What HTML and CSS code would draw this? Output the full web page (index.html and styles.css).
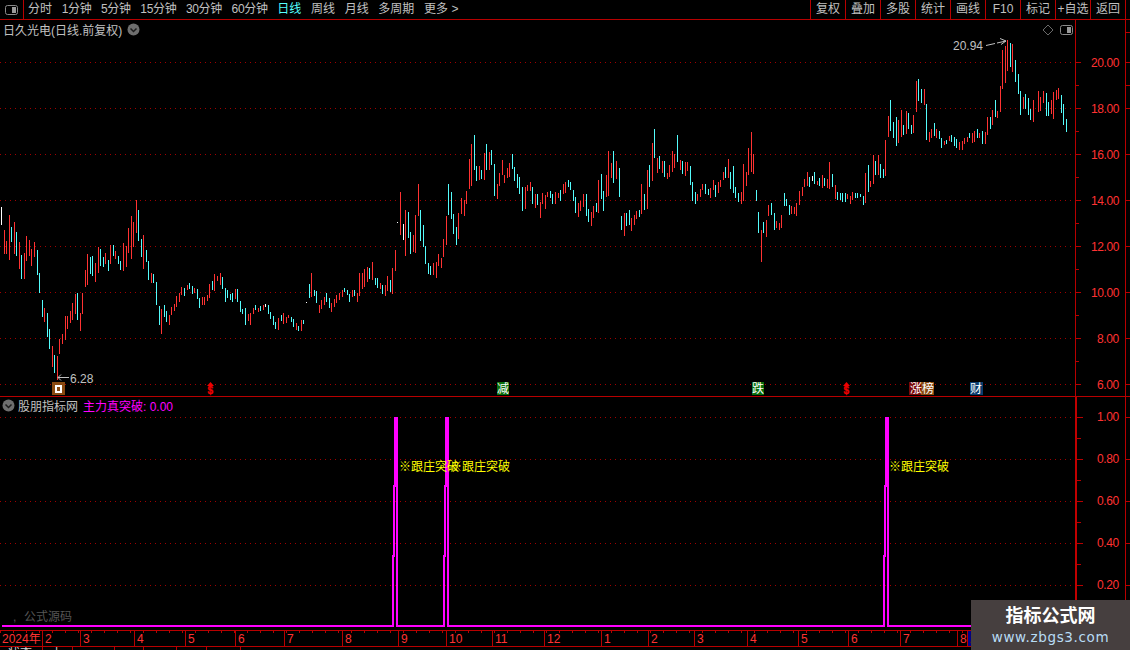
FILE: index.html
```html
<!DOCTYPE html>
<html lang="zh">
<head>
<meta charset="utf-8">
<title>日久光电</title>
<link rel="stylesheet" href="styles.css">
</head>
<body>
<div class="app">
  <header class="toolbar">
    <div class="toggle">
      <svg width="13" height="10" viewBox="0 0 13 10"><rect x=".5" y=".5" width="12" height="9" rx="2" fill="#000" stroke="#8a8a8a"/><rect x="7" y="2" width="4" height="6" fill="#9a9a9a"/></svg>
    </div>
    <nav class="periods">
      <span>分时</span><span class="n">1分钟</span><span class="n">5分钟</span><span class="n">15分钟</span><span class="n">30分钟</span><span class="n">60分钟</span><span class="on">日线</span><span>周线</span><span>月线</span><span>多周期</span><span>更多 &gt;</span>
    </nav>
    <nav class="actions">
      <span>复权</span><span>叠加</span><span>多股</span><span>统计</span><span>画线</span><span>F10</span><span>标记</span><span>+自选</span><span>返回</span>
    </nav>
  </header>

  <section class="panel upper">
    <div class="legend">
      <span>日久光电(日线.前复权)</span>
      <svg class="chev" width="13" height="13" viewBox="0 0 13 13"><circle cx="6.5" cy="6.5" r="6" fill="#6e6e6e"/><path d="M3.5 5.5 6.500 8.500 9.500 5.500" fill="none" stroke="#1c1c1c" stroke-width="1.500"/></svg>
    </div>
    <svg class="chart" width="1130" height="376" viewBox="0 20 1130 376">
      <path class="grid" d="M0 62.500H1075M0 108.500H1075M0 154.500H1075M0 200.500H1075M0 246.500H1075M0 292.500H1075M0 338.500H1075M0 384.500H1075"/>
      <path class="axis" d="M1075.500 20V396M1125.500 20V396M1075 62.500H1081M1075 85.500H1079M1075 108.500H1081M1075 131.500H1079M1075 154.500H1081M1075 177.500H1079M1075 200.500H1081M1075 223.500H1079M1075 246.500H1081M1075 269.500H1079M1075 292.500H1081M1075 315.500H1079M1075 338.500H1081M1075 361.500H1079M1075 384.500H1081M1126 32.500H1130M1126 62.500H1130M1126 85.500H1130M1126 108.500H1130M1126 154.500H1130M1126 200.500H1130M1126 246.500H1130M1126 292.500H1130M1126 338.500H1130M1126 384.500H1130"/>
      <path class="up" d="M4.500 230V254M6.500 241V254M9.500 215V260M14.500 222V254M19.500 242V269M24.500 253V279M26.500 236V261M29.500 240V256M31.500 249V266M34.500 242V257M44.500 308V322M52.500 346V367M57.500 356V380M59.500 339V354M62.500 334V344M65.500 316V340M67.500 316V329M70.500 311V323M72.500 303V320M75.500 294V314M80.500 313V331M82.500 293V314M85.500 270V287M87.500 254V285M95.500 263V282M98.500 247V273M105.500 253V264M110.500 245V264M115.500 251V259M123.500 243V271M126.500 246V267M128.500 228V253M131.500 216V259M133.500 222V247M136.500 200V233M143.500 235V269M151.500 273V283M161.500 309V334M169.500 315V325M171.500 307V315M174.500 304V311M176.500 296V307M179.500 293V302M181.500 287V295M187.500 285V290M194.500 288V293M202.500 297V305M204.500 297V305M207.500 295V301M209.500 284V298M214.500 274V291M217.500 276V281M220.500 273V285M235.500 289V299M248.500 314V321M250.500 313V325M253.500 308V314M258.500 308V312M263.500 305V310M278.500 318V330M283.500 313V324M286.500 317V323M288.500 315V318M296.500 323V330M301.500 320V331M311.500 273V297M319.500 305V313M321.500 300V309M324.500 297V305M331.500 303V312M334.500 299V307M336.500 295V303M339.500 293V300M342.500 290V297M352.500 290V297M357.500 293V302M359.500 273V296M362.500 273V289M364.500 269V287M367.500 267V282M372.500 262V280M380.500 283V289M385.500 285V296M387.500 276V291M392.500 268V294M395.500 250V271M400.500 192V235M405.500 210V256M413.500 235V252M415.500 215V253M418.500 184V216M433.500 263V275M436.500 262V278M438.500 254V266M441.500 258V268M443.500 239V257M446.500 216V245M458.500 213V239M461.500 198V214M464.500 200V216M466.500 191V204M469.500 159V189M471.500 144V186M479.500 166V180M484.500 153V180M489.500 152V170M497.500 184V199M499.500 173V186M502.500 160V175M504.500 175V183M507.500 168V178M509.500 163V177M525.500 187V209M527.500 185V191M530.500 182V191M535.500 194V208M540.500 202V218M542.500 193V204M545.500 195V209M547.500 192V197M555.500 192V204M558.500 193V198M563.500 184V194M565.500 182V193M578.500 203V217M580.500 201V211M583.500 194V207M591.500 212V226M593.500 206V218M598.500 180V213M606.500 175V197M608.500 151V196M611.500 163V178M616.500 161V179M624.500 213V236M631.500 218V231M634.500 215V225M636.500 211V219M641.500 184V214M647.500 170V209M652.500 143V181M657.500 158V173M662.500 161V173M667.500 173V179M669.500 165V177M672.500 151V172M674.500 154V168M680.500 160V170M685.500 162V176M687.500 162V171M697.500 194V201M700.500 189V197M702.500 184V190M710.500 188V198M713.500 180V190M718.500 182V193M720.500 180V187M723.500 172V180M728.500 159V178M741.500 192V204M743.500 164V201M746.500 172V186M748.500 148V175M751.500 132V172M753.500 154V174M761.500 230V262M766.500 220V237M768.500 205V216M776.500 221V228M779.500 223V230M781.500 215V228M791.500 206V214M794.500 207V214M796.500 203V216M799.500 191V205M802.500 187V196M804.500 179V187M807.500 172V186M817.500 181V185M822.500 175V188M827.500 179V188M829.500 162V189M835.500 185V199M847.500 194V199M850.500 196V204M852.500 192V200M865.500 173V203M870.500 181V187M873.500 155V184M878.500 155V175M885.500 140V176M888.500 116V137M898.500 120V143M901.500 110V137M906.500 111V134M913.500 115V133M916.500 81V112M924.500 89V105M929.500 132V142M931.500 129V138M936.500 129V138M944.500 141V145M949.500 136V141M959.500 142V150M962.500 141V150M964.500 138V144M967.500 137V142M972.500 133V143M974.500 131V142M979.500 133V138M985.500 132V144M987.500 117V135M992.500 110V125M997.500 111V118M1000.500 86V112M1002.500 50V89M1005.500 46V83M1007.500 40V71M1012.500 44V72M1023.500 97V109M1033.500 100V122M1038.500 91V112M1040.500 97V111M1043.500 91V103M1051.500 100V114M1053.500 92V119M1056.500 90V100M1058.500 88V99"/>
      <path class="down" d="M11.500 227V242M16.500 232V256M21.500 255V279M37.500 250V275M39.500 273V293M42.500 300V317M47.500 313V337M49.500 329V349M54.500 355V373M77.500 293V320M90.500 257V274M92.500 256V276M100.500 249V266M103.500 257V267M108.500 260V271M113.500 245V256M118.500 256V264M120.500 261V270M138.500 210V241M141.500 239V257M146.500 250V262M148.500 261V280M153.500 274V283M156.500 282V305M159.500 306V325M164.500 305V317M166.500 311V322M184.500 288V296M189.500 283V289M192.500 286V294M197.500 289V299M199.500 298V308M212.500 281V290M222.500 277V289M225.500 288V302M227.500 290V298M230.500 294V300M232.500 293V302M237.500 289V302M240.500 301V312M242.500 309V314M245.500 308V325M255.500 305V310M260.500 306V311M268.500 305V314M270.500 312V319M273.500 316V325M275.500 322V329M281.500 315V321M291.500 317V322M293.500 319V327M298.500 326V331M303.500 320V324M309.500 284V298M314.500 290V296M316.500 291V303M326.500 293V302M329.500 298V308M344.500 288V292M347.500 290V295M349.500 294V302M354.500 290V296M369.500 268V279M375.500 278V285M377.500 278V288M382.500 285V294M390.500 280V292M408.500 212V238M410.500 232V254M420.500 210V241M423.500 225V247M425.500 246V264M428.500 263V274M430.500 266V275M448.500 184V215M451.500 192V219M453.500 214V234M456.500 227V245M474.500 135V170M476.500 166V181M481.500 170V179M486.500 144V170M491.500 150V165M494.500 164V196M512.500 154V169M514.500 167V181M517.500 174V188M519.500 177V194M522.500 187V211M532.500 187V204M537.500 194V205M550.500 191V198M552.500 194V204M560.500 190V201M568.500 180V187M570.500 182V190M573.500 190V201M575.500 197V213M586.500 194V216M588.500 209V222M596.500 203V212M601.500 174V199M603.500 191V211M613.500 151V183M619.500 168V197M621.500 216V230M626.500 213V226M629.500 210V225M639.500 210V217M644.500 194V210M649.500 165V187M654.500 129V158M659.500 156V169M664.500 161V177M677.500 135V162M682.500 161V174M690.500 166V185M692.500 182V201M695.500 192V204M705.500 184V194M708.500 189V195M715.500 185V197M725.500 167V178M730.500 172V189M733.500 166V193M735.500 187V198M738.500 193V202M756.500 190V201M758.500 212V233M763.500 222V233M771.500 203V215M774.500 213V230M784.500 193V206M786.500 199V206M789.500 205V215M809.500 177V187M814.500 172V184M819.500 178V186M824.500 178V186M832.500 174V187M837.500 192V200M840.500 193V200M842.500 193V202M845.500 193V202M855.500 193V198M857.500 193V198M860.500 194V197M863.500 196V205M868.500 165V192M875.500 161V175M880.500 164V178M883.500 169V178M890.500 100V131M893.500 122V138M896.500 117V146M903.500 125V135M908.500 113V129M911.500 125V134M918.500 79V101M921.500 89V103M926.500 104V140M934.500 123V136M939.500 131V139M941.500 138V148M946.500 140V144M951.500 135V142M954.500 137V146M956.500 139V148M969.500 133V138M977.500 129V138M982.500 131V144M990.500 117V129M995.500 100V117M1010.500 43V67M1015.500 60V82M1018.500 74V94M1020.500 91V115M1025.500 94V109M1028.500 98V115M1030.500 109V120M1046.500 93V116M1048.500 102V116M1061.500 95V113M1063.500 104V125M1066.500 119V132"/>
      <path class="flat" d="M1.500 207V225M265.500 304V307M306.500 302V303M397.500 222V223M403.500 224V240M812.500 176V181"/>
      <g class="price">
        <text x="1091" y="67">20.00</text><text x="1091" y="113">18.00</text><text x="1091" y="159">16.00</text><text x="1091" y="205">14.00</text><text x="1091" y="251">12.00</text><text x="1091" y="297">10.00</text><text x="1097" y="343">8.00</text><text x="1097" y="389">6.00</text>
      </g>
      <path class="note" d="M986 45.500 995 43.500M997 43 1006 41M1000 38.500 1006 41 1001 44.500"/>
      <text class="notetext" x="953" y="50">20.94</text>
      <path class="note" d="M69 377.500H58M61 374.500 58 377.500 61 380.500"/>
      <text class="notetext" x="70" y="383">6.28</text>
      <path class="diamond" d="M1048 25 1053 30 1048 35 1043 30Z"/>
      <rect class="win" x="1060.500" y="25.500" width="12" height="9" rx="2"/><rect class="winbar" x="1067" y="27" width="4" height="6"/>
      <rect class="tag-brown" x="52" y="382" width="13" height="13"/><rect class="tag-inner" x="56" y="386" width="5" height="6"/>
      <path class="dollarhat" d="M210.500 382 214 386H207Z"/><text class="dollar" x="207.500" y="394">$</text>
      <rect class="tag-green" x="497" y="382" width="12" height="13"/><text class="tagtext" x="497" y="393">减</text>
      <rect class="tag-green" x="752" y="382" width="12" height="13"/><text class="tagtext" x="752" y="393">跌</text>
      <path class="dollarhat" d="M846.500 382 850 386H843Z"/><text class="dollar" x="843.500" y="394">$</text>
      <rect class="tag-red" x="909" y="382" width="12" height="13"/><rect class="tag-brown" x="921" y="382" width="13" height="13"/><text class="tagtext" x="910" y="393">涨榜</text>
      <rect class="tag-blue" x="970" y="382" width="13" height="13"/><text class="tagtext" x="970" y="393">财</text>
    </svg>
  </section>

  <section class="panel lower">
    <div class="legend">
      <svg class="chev" width="13" height="13" viewBox="0 0 13 13"><circle cx="6.500" cy="6.500" r="6" fill="#6e6e6e"/><path d="M3.500 5.500 6.500 8.500 9.500 5.500" fill="none" stroke="#1c1c1c" stroke-width="1.500"/></svg>
      <span>股朋指标网</span>
      <span class="formula">主力真突破: 0.00</span>
    </div>
    <svg class="chart" width="1130" height="233" viewBox="0 397 1130 233">
      <path class="grid" d="M0 417.500H1075M0 459.500H1075M0 501.500H1075M0 543.500H1075M0 585.500H1075"/>
      <path class="axis2" d="M1076 397V630"/>
      <path class="axis" d="M1125.500 397V630M1077 417.500H1083M1077 438.500H1081M1077 459.500H1083M1077 480.500H1081M1077 501.500H1083M1077 522.500H1081M1077 543.500H1083M1077 564.500H1081M1077 585.500H1083M1077 606.500H1081M1126 417.500H1130M1126 459.500H1130M1126 501.500H1130M1126 543.500H1130M1126 585.500H1130"/>
      <path class="line" d="M2 626H393V556H394V486H395V418H397V626H444V556H445V486H446V418H448V626H884V556H885V486H886V418H888V626H1075"/>
      <g class="price">
        <text x="1097" y="421">1.00</text><text x="1097" y="463">0.80</text><text x="1097" y="505">0.60</text><text x="1097" y="547">0.40</text><text x="1097" y="589">0.20</text>
      </g>
      <text class="signal" x="399" y="471">※跟庄突破</text>
      <text class="signal" x="450" y="471">※跟庄突破</text>
      <text class="signal" x="889" y="471">※跟庄突破</text>
      <text class="source" x="13" y="621">,</text>
      <text class="source" x="24" y="621">公式源码</text>
    </svg>
  </section>

  <div class="timeline">
    <span>2024年</span><span>2</span><span>3</span><span>4</span><span>5</span><span>6</span><span>7</span><span>8</span><span>9</span><span>10</span><span>11</span><span>12</span><span>1</span><span>2</span><span>3</span><span>4</span><span>5</span><span>6</span><span>7</span><span>8</span><span class="current">2</span>
  </div>
  <div class="statusbar">
    <span>状态</span><span>上</span><span></span><span></span><span></span><span></span><span></span>
  </div>

  <aside class="watermark">
    <strong>指标公式网</strong>
    <em>www.zbgs3.com</em>
  </aside>
</div>
</body>
</html>
```
FILE: styles.css
```css
* { box-sizing: border-box; }
html, body { margin: 0; padding: 0; background: #000; }
body {
  width: 1130px;
  height: 650px;
  overflow: hidden;
  font-family: "Liberation Sans", "Noto Sans CJK SC", sans-serif;
  font-size: 12px;
  color: #c0c0c0;
}
.app { position: relative; width: 1130px; height: 650px; display: flex; flex-direction: column; }

.toolbar {
  flex: none;
  height: 20px;
  display: flex;
  align-items: stretch;
  border-bottom: 1px solid #b80000;
  line-height: 18px;
}
.toggle {
  width: 24px;
  display: flex;
  align-items: center;
  justify-content: center;
  padding-right: 1px;
  border-right: 1px solid #b80000;
}
.toggle svg { display: block; }
.periods { display: flex; gap: 9.7px; padding-left: 4px; white-space: nowrap; }
.periods .n { letter-spacing: -.35px; }
.periods .on { color: #55ffff; }
.actions { margin-left: auto; margin-right: 4px; display: flex; border-right: 1px solid #b80000; }
.actions span {
  width: 35px;
  text-align: center;
  border-left: 1px solid #b80000;
  white-space: nowrap;
}

.panel { position: relative; flex: none; }
.chart { display: block; }
.upper { height: 377px; border-bottom: 1px solid #b80000; }
.lower { height: 233px; }
.legend {
  position: absolute;
  left: 3px;
  top: 1px;
  display: flex;
  align-items: center;
  gap: 5px;
  height: 17px;
  white-space: nowrap;
}
.lower .legend { left: 2px; top: 0; gap: 3px; }
.legend .formula { color: #ff00ff; margin-left: 2px; }
.chev { display: block; flex: none; }

.grid { fill: none; stroke: #a00000; stroke-width: 1; stroke-dasharray: 1 4; }
.axis { fill: none; stroke: #b80000; stroke-width: 1; }
.axis2 { fill: none; stroke: #c00000; stroke-width: 2; }
.up { fill: none; stroke: #ff3232; stroke-width: 1; }
.down { fill: none; stroke: #54fcfc; stroke-width: 1; }
.flat { fill: none; stroke: #fff; stroke-width: 1; }
.line { fill: none; stroke: #ff00ff; stroke-width: 2; }
.price text { fill: #ff3232; font-size: 12px; letter-spacing: -.4px; }
.note { fill: none; stroke: #c0c0c0; stroke-width: 1; }
.notetext { fill: #c0c0c0; font-size: 12px; }
.diamond { fill: none; stroke: #6a6a6a; stroke-width: 1; }
.win { fill: #000; stroke: #8a8a8a; stroke-width: 1; }
.winbar { fill: #9a9a9a; }
.tag-brown { fill: #8a4a10; }
.tag-red { fill: #7a0808; }
.tag-green { fill: #0a6e0a; }
.tag-blue { fill: #0a3c6e; }
.tag-inner { fill: #8a4a10; stroke: #fff; stroke-width: 2; }
.tagtext { fill: #fff; font-size: 12px; }
.dollarhat { fill: #f00000; }
.dollar { fill: #f00000; stroke: #f00000; stroke-width: .3px; font-size: 10px; font-weight: 700; }
.signal { fill: #ffff00; font-size: 12px; }
.source { fill: #555; font-size: 12px; }

.timeline {
  flex: none;
  height: 17px;
  display: grid;
  grid-template-columns: 43px 38px 54px 51px 50px 49px 58px 56px 48px 46px 52px 57px 47px 46px 53px 51px 50px 52px 57px 10px 162px;
  border-top: 1px solid #b80000;
  border-bottom: 1px solid #b80000;
  background-image: repeating-linear-gradient(90deg, #b80000 0, #b80000 1px, transparent 1px, transparent 13px);
  background-size: 100% 2px;
  background-repeat: no-repeat;
  color: #ff3232;
  line-height: 16px;
}
.timeline span { padding-left: 2px; border-right: 1px solid #b80000; overflow: hidden; background: linear-gradient(#0000 2px, #000 2px); }
.timeline .current { background: #00008a; color: #ff3232; border: 0; }

.statusbar {
  flex: none;
  height: 3px;
  overflow: hidden;
  display: grid;
  grid-template-columns: 43px 30px 42px 29px 33px 30px 34px;
  line-height: 12px;
  color: #d0d0d0;
}
.statusbar span { padding-left: 8px; border-right: 1px solid #b80000; white-space: nowrap; }

.watermark {
  position: absolute;
  left: 971px;
  top: 600px;
  width: 159px;
  height: 50px;
  background: #463f3f;
  display: flex;
  flex-direction: column;
  align-items: center;
  padding-top: 5px;
}
.watermark strong { color: #fff; font-size: 18px; line-height: 22px; font-weight: 700; }
.watermark em { color: #b8dcf5; font-style: normal; line-height: 20px; letter-spacing: .65px; font-family: "DejaVu Sans", sans-serif; font-size: 13.5px; }
```
